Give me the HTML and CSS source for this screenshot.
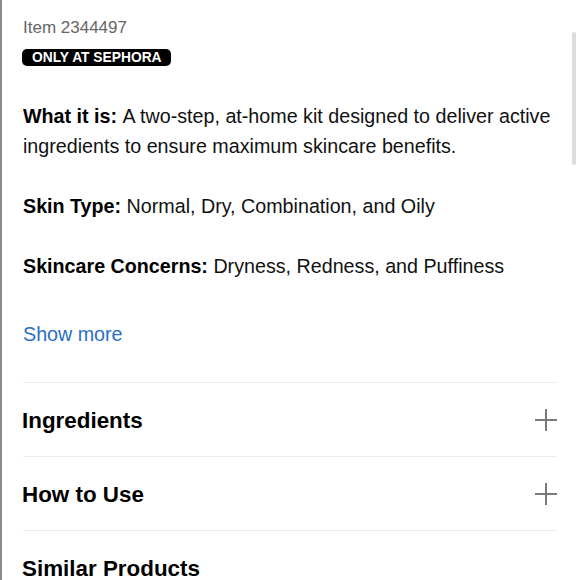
FILE: index.html
```html
<!DOCTYPE html>
<html lang="en">
<head>
<meta charset="utf-8">
<title>Product details</title>
<link rel="stylesheet" href="styles.css">
</head>
<body>
<main class="page">
  <div class="item-no">Item 2344497</div>
  <div class="badge-row"><span class="badge">ONLY AT SEPHORA</span></div>
  <section class="desc">
    <p class="para"><b class="label">What it is: </b><span>A two-step, at-home kit designed to deliver active ingredients to ensure maximum skincare benefits.</span></p>
    <p class="para"><b class="label">Skin Type: </b><span>Normal, Dry, Combination, and Oily</span></p>
    <p class="para"><b class="label">Skincare Concerns: </b><span>Dryness, Redness, and Puffiness</span></p>
  </section>
  <a class="show-more" href="#">Show more</a>
  <div class="accordion">
    <div class="acc-row">
      <h2 class="acc-title">Ingredients</h2>
      <svg class="plus" viewBox="0 0 22 22" width="22" height="22" aria-hidden="true"><path d="M11 0V22M0 11H22" stroke="#7a7a7a" stroke-width="2" fill="none"/></svg>
    </div>
    <div class="acc-row">
      <h2 class="acc-title">How to Use</h2>
      <svg class="plus" viewBox="0 0 22 22" width="22" height="22" aria-hidden="true"><path d="M11 0V22M0 11H22" stroke="#7a7a7a" stroke-width="2" fill="none"/></svg>
    </div>
    <div class="acc-row">
      <h2 class="acc-title">Similar Products</h2>
    </div>
  </div>
</main>
<div class="scrollbar"></div>
</body>
</html>
```
FILE: styles.css
```css
html, body {
  margin: 0;
  padding: 0;
  background: #fff;
  overflow: hidden;
}
body {
  font-family: "Liberation Sans", Arial, Helvetica, sans-serif;
  color: #111;
  border-left: 2px solid #8c8c8c;
  min-height: 100vh;
  box-sizing: border-box;
}
.page {
  padding: 18px 23px 0 21px;
}
.item-no {
  font-size: 17px;
  line-height: 20px;
  color: #666;
}
.badge-row {
  margin-top: 11px;
  line-height: 0;
}
.badge {
  display: inline-block;
  background: #000;
  color: #fff;
  font-weight: bold;
  font-size: 13.8px;
  line-height: 17px;
  padding: 0 9px 0 10px;
  border-radius: 5px;
  margin-left: -1px;
}
.desc {
  margin-top: 35px;
}
.para {
  margin: 0 0 30px 0;
  font-size: 19.7px;
  line-height: 30px;
  color: #111;
}
.para:last-child {
  margin-bottom: 0;
}
.label {
  font-weight: bold;
  color: #000;
}
.show-more {
  display: block;
  margin-top: 38px;
  font-size: 19.7px;
  line-height: 30px;
  color: #2a6fc4;
  text-decoration: none;
}
.accordion {
  margin-top: 33px;
}
.acc-row {
  display: flex;
  align-items: center;
  justify-content: space-between;
  height: 74px;
  box-sizing: border-box;
  border-top: 1px solid #ebebeb;
}
.acc-title {
  margin: 0;
  font-size: 22.4px;
  font-weight: bold;
  color: #000;
  line-height: 26px;
  margin-left: -1px;
  padding-top: 2px;
}
.plus {
  display: block;
  flex: none;
}
.scrollbar {
  position: fixed;
  top: 32px;
  right: 4px;
  width: 4px;
  height: 133px;
  background: #dcdcdc;
  border-radius: 2px;
}
```
